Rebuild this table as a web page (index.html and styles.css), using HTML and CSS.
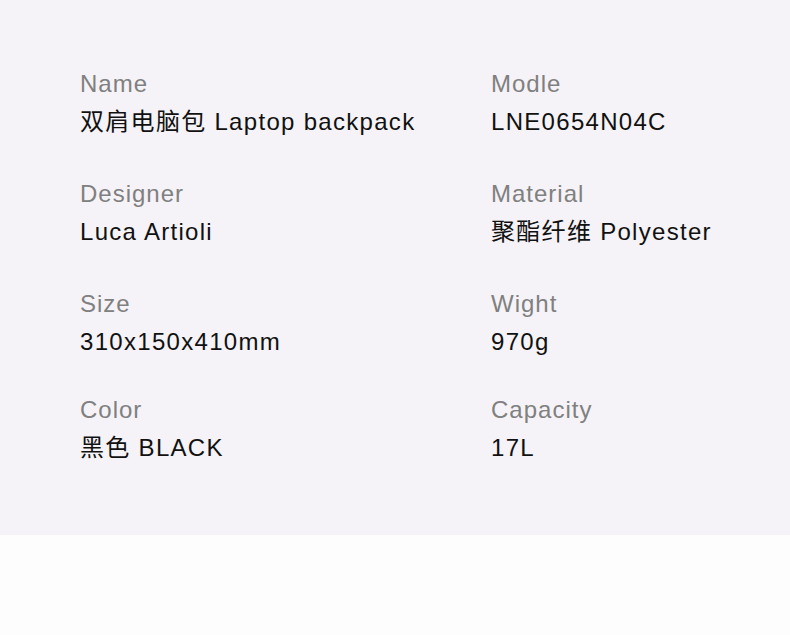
FILE: index.html
```html
<!DOCTYPE html>
<html lang="zh">
<head>
<meta charset="utf-8">
<link rel="stylesheet" href="styles.css">
</head>
<body>
<section class="specs">
  <div class="grid">
    <div class="item"><div class="label">Name</div><div class="value">双肩电脑包 Laptop backpack</div></div>
    <div class="item"><div class="label">Modle</div><div class="value">LNE0654N04C</div></div>
    <div class="item"><div class="label">Designer</div><div class="value">Luca Artioli</div></div>
    <div class="item"><div class="label">Material</div><div class="value">聚酯纤维 Polyester</div></div>
    <div class="item"><div class="label">Size</div><div class="value">310x150x410mm</div></div>
    <div class="item"><div class="label">Wight</div><div class="value">970g</div></div>
    <div class="item last"><div class="label">Color</div><div class="value">黑色 BLACK</div></div>
    <div class="item last"><div class="label">Capacity</div><div class="value">17L</div></div>
  </div>
</section>
</body>
</html>
```
FILE: styles.css
```css
html, body {
  margin: 0;
  padding: 0;
  background: #fdfdfd;
}
body {
  font-family: "Liberation Sans", "Noto Sans CJK SC", sans-serif;
}
.specs {
  background: #f5f3f7;
  height: 535px;
  box-sizing: border-box;
  padding: 69px 0 0 80px;
}
.grid {
  display: grid;
  grid-template-columns: 411px 1fr;
  row-gap: 42px;
}
.item {
  display: flex;
  flex-direction: column;
  gap: 8px;
}
.item.last {
  margin-top: -4px;
}
.label {
  font-size: 24px;
  line-height: 30px;
  color: #808080;
  letter-spacing: 1px;
}
.value {
  font-size: 24px;
  line-height: 30px;
  color: #111;
  letter-spacing: 1.3px;
}
```
